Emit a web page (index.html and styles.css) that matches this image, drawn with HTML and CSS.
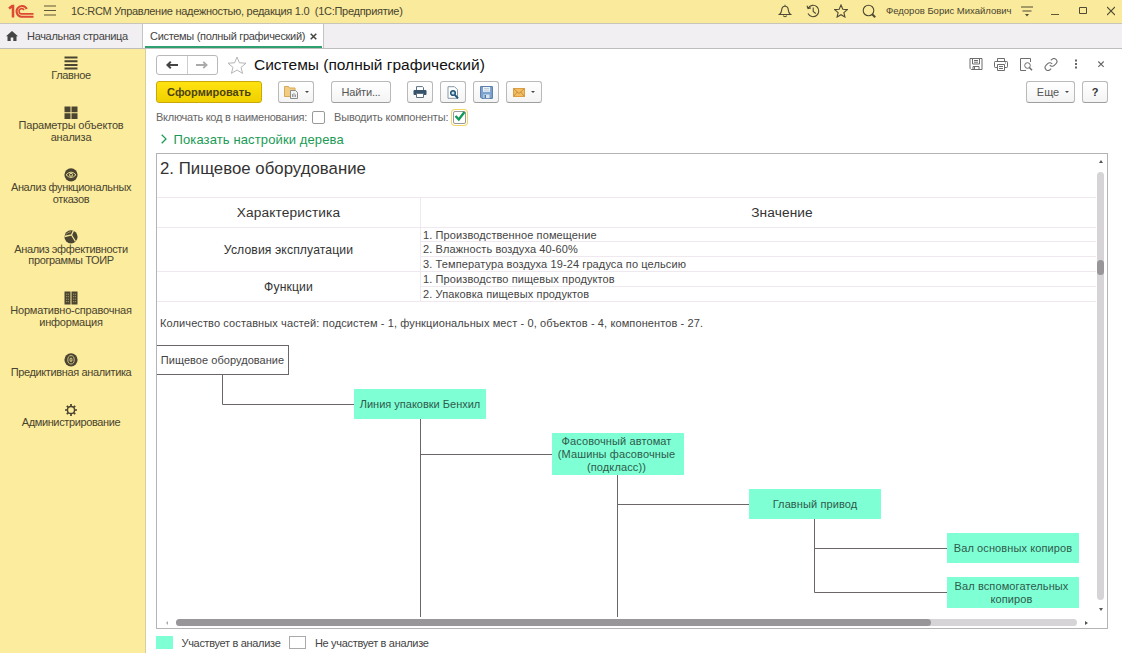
FILE: index.html
```html
<!DOCTYPE html>
<html lang="ru">
  <head>
    <meta charset="UTF-8" />
    <meta name="viewport" content="width=device-width, initial-scale=1.0" />
    <title>1C:RCM Управление надежностью</title>
    <link rel="stylesheet" href="styles.css">
  </head>
  <body>
    <!-- Title bar -->
    <header class="titlebar">
      <svg class="logo" width="26" height="14" viewBox="0 0 26 14" fill="none" stroke="#dc4a35">
        <path d="M1 4.500 4.200 2H5v11.500" stroke-width="2.500"/>
        <path d="M18.800 5A5.400 5.400 0 1 0 13.500 12.800H25.500" stroke-width="2"/>
        <path d="M16 6.200A2.600 2.600 0 1 0 13.500 9.900H25.500" stroke-width="1.600"/>
      </svg>
      <svg class="burger" width="12" height="11" viewBox="0 0 12 11" stroke="#5d5638" stroke-width="1.200">
        <path d="M0 1h12M0 5.500h12M0 10h12"/>
      </svg>
      <span class="app-name">1C:RCM Управление надежностью, редакция 1.0&nbsp; (1С:Предприятие)</span>
      <div class="title-icons">
        <svg width="14" height="14" viewBox="0 0 14 14" fill="none" stroke="#4e4a35" stroke-width="1.100">
          <path d="M1.500 10.500c1.800-1.200 2-2.600 2.200-4.600C3.900 3.600 5 2.300 7 2.300s3.100 1.300 3.300 3.600c.2 2 .4 3.400 2.200 4.600zM7 .8v1.500M5.400 11.500c.3 1.700 2.900 1.700 3.200 0"/>
        </svg>
        <svg width="14" height="14" viewBox="0 0 14 14" fill="none" stroke="#4e4a35" stroke-width="1.100">
          <path d="M2.200 4A5.700 5.700 0 1 1 2 9.600M1 1.800l1 2.700 2.900-.6M7.200 3.500v4l2.600 2"/>
        </svg>
        <svg width="14" height="14" viewBox="0 0 14 14" fill="none" stroke="#4e4a35" stroke-width="1.100">
          <path d="m7 1 1.800 4.200 4.500.4-3.400 3 1 4.400L7 10.700 3.100 13l1-4.400-3.400-3 4.500-.4z"/>
        </svg>
        <svg width="14" height="14" viewBox="0 0 14 14" fill="none" stroke="#4e4a35" stroke-width="1.100">
          <circle cx="6.500" cy="6.500" r="5.300"/><path d="m10.200 10.200 3 3" stroke-width="2"/>
        </svg>
      </div>
      <span class="user-name">Федоров Борис Михайлович</span>
      <svg class="service" width="12" height="12" viewBox="0 0 12 12" stroke="#4e4a35" stroke-width="1.200">
        <path d="M0 2h12M1.500 6h9"/><path d="M4 9h4l-2 2.500z" fill="#4e4a35" stroke="none"/>
      </svg>
      <div class="window-buttons">
        <svg width="8" height="10" viewBox="0 0 8 10" stroke="#5d5638"><path d="M0 8.500h8"/></svg>
        <svg width="8" height="10" viewBox="0 0 8 10" fill="none" stroke="#4e4a35"><path d="M.5 1.500h7v6h-7z"/></svg>
        <svg width="8" height="10" viewBox="0 0 8 10" stroke="#4e4a35" stroke-width="1.100"><path d="m0 1 8 8M8 1 0 9"/></svg>
      </div>
    </header>

    <!-- Open pages -->
    <nav class="tabs">
      <div class="tab home">
        <svg width="12" height="10" viewBox="0 0 12 10" fill="#444"><path d="M6 0 0 5.300h1.500V10h3.200V6.500h2.600V10h3.200V5.300H12z"/></svg>
        <span class="tab-text">Начальная страница</span>
      </div>
      <div class="tab active">
        <span class="tab-text">Системы (полный графический)</span>
        <svg width="7" height="7" viewBox="0 0 7 7" stroke="#444" stroke-width="1.500"><path d="m.7.7 5.600 5.600M6.300.7.7 6.300"/></svg>
      </div>
    </nav>

    <div class="workspace">
      <!-- Sections -->
      <aside class="sidebar">
        <div class="section">
          <svg width="14" height="14" viewBox="0 0 14 14" stroke="#4a4431" stroke-width="2"><path d="M.5 1.500h13M.5 5.200h13M.5 8.900h13M.5 12.600h13"/></svg>
          <span>Главное</span>
        </div>
        <div class="section wide">
          <svg width="14" height="14" viewBox="0 0 14 14" fill="#4a4431"><path d="M.5.500h6v5.800h-6zM7.500.500h6v5.800h-6zM.5 7.300h6v5.800h-6zM7.500 7.300h6v5.800h-6z"/></svg>
          <span>Параметры объектов<br>анализа</span>
        </div>
        <div class="section">
          <svg width="14" height="14" viewBox="0 0 14 14" fill="none"><circle cx="7" cy="6.800" r="6.600" fill="#4a4431"/><path d="M2 6.800Q7 1.500 12 6.800 7 12.100 2 6.800z" stroke="#e6d891"/><circle cx="7" cy="6.800" r="1.500" stroke="#e6d891"/></svg>
          <span>Анализ функциональных<br>отказов</span>
        </div>
        <div class="section">
          <svg width="14" height="14" viewBox="0 0 14 14" fill="none"><circle cx="7" cy="6.800" r="6.600" fill="#4a4431"/><path d="M.5 6.500 7.500 5 9.500.4M7.500 5l4 6.500" stroke="#f3e596" stroke-width="1.300"/><path d="M2 4.700Q3.500 1.800 7 1.700" stroke="#a59b6b"/></svg>
          <span>Анализ эффективности<br>программы ТОИР</span>
        </div>
        <div class="section wide">
          <svg width="14" height="14" viewBox="0 0 14 14"><path d="M.5.500h6v12.900h-6zM7.500.500h6v12.900h-6z" fill="#4a4431"/><path d="M2 3.200h3M2 5.700h3M2 8.200h3M2 10.700h3M9 3.200h3M9 5.700h3M9 8.200h3M9 10.700h3" stroke="#a59b6b" stroke-dasharray="1.200 .6"/></svg>
          <span>Нормативно-справочная<br>информация</span>
        </div>
        <div class="section">
          <svg width="14" height="14" viewBox="0 0 14 14" fill="none"><circle cx="7" cy="6.800" r="6.600" fill="#4a4431"/><ellipse cx="7" cy="6.800" rx="3.200" ry="4.200" stroke="#cdc184"/><ellipse cx="7" cy="6.800" rx="1" ry="1.800" stroke="#e6d891"/></svg>
          <span>Предиктивная аналитика</span>
        </div>
        <div class="section">
          <svg width="14" height="14" viewBox="0 0 14 14" fill="none" stroke="#4a4431"><circle cx="7" cy="7" r="3.600" stroke-width="1.500"/><path d="M7 1v2.400M7 10.600V13M1 7h2.400M10.600 7H13M2.800 2.800l1.600 1.600M9.600 9.600l1.600 1.600M11.200 2.800 9.600 4.400M4.400 9.600l-1.600 1.600" stroke-width="1.700"/></svg>
          <span>Администрирование</span>
        </div>
      </aside>

      <main class="page">
        <div class="page-head">
          <div class="history">
            <button class="history-btn"><svg width="12" height="8" viewBox="0 0 12 8" fill="none" stroke="#444" stroke-width="2"><path d="M12 4H1.500M4.800.8 1.400 4l3.400 3.200"/></svg></button>
            <button class="history-btn"><svg width="12" height="8" viewBox="0 0 12 8" fill="none" stroke="#aaa" stroke-width="1.800"><path d="M0 4h10.500M7.200.8 10.600 4 7.200 7.200"/></svg></button>
          </div>
          <svg class="favorite" width="20" height="18" viewBox="0 0 20 18" fill="none" stroke="#b5b5b5"><path d="m10 1 2.400 5.800 6.600.4-5 4.200 1.600 6L10 14l-5.600 3.400 1.600-6-5-4.200 6.600-.4z"/></svg>
          <h1>Системы (полный графический)</h1>
          <div class="head-icons">
            <svg width="14" height="13" viewBox="0 0 14 13" fill="none" stroke="#6c6c6c"><path d="M1 .5h12v11H2.200L1 10.300zM3.500.5v5.500h7V.5M4 11.500V8.500h6v3M5 2.500h4M5 4.200h4M5.500 9v2.500"/></svg>
            <svg width="14" height="13" viewBox="0 0 14 13" fill="none" stroke="#6c6c6c"><path d="M3.500 3.500V.5h7v3M3.500 9.500H1.200q-.7 0-.7-.8V4.300q0-.8.7-.8h11.600q.7 0 .7.800v4.400q0 .8-.7.800h-2.300M3.500 6.500h7v6h-7zM5 8.500h4M5 10.500h4M11 5h1"/></svg>
            <svg width="14" height="13" viewBox="0 0 14 13" fill="none" stroke="#6c6c6c"><path d="M7 12.500H1.500V.5h10v3.500"/><circle cx="8.500" cy="7.500" r="2.800"/><path d="m10.400 9.400 2.600 2.800" stroke-width="1.500"/></svg>
            <svg width="14" height="13" viewBox="1 1 22 22" fill="none" stroke="#6c6c6c" stroke-width="1.800"><path d="M10 13a5 5 0 0 0 7.540.540l3-3a5 5 0 0 0-7.070-7.070l-1.720 1.710M14 11a5 5 0 0 0-7.540-.540l-3 3a5 5 0 0 0 7.070 7.070l1.710-1.710"/></svg>
            <svg width="14" height="13" viewBox="0 0 14 13" fill="#666"><path d="M6 1.500h2v2H6zM6 5h2v2H6zM6 8.500h2v2H6z"/></svg>
            <svg width="14" height="13" viewBox="0 0 14 13" stroke="#666" stroke-width="1.100"><path d="m4.300 3.500 5.400 5.400M9.700 3.500 4.300 8.900"/></svg>
          </div>
        </div>

        <div class="toolbar">
          <button class="btn primary">Сформировать</button>
          <button class="btn variants">
            <svg width="15" height="14" viewBox="0 0 15 14"><path d="M.5 11.500V1.500h4l1 1.500H11v8.500z" fill="#f0cd83" stroke="#d9a755"/><path d="M6.500 5.500h5l2 2v6h-7z" fill="#f4f4f4" stroke="#8b8b8b"/><path d="M8.500 12V9M10 12V8M11.500 12V9.500" stroke="#999"/></svg>
            <i class="caret"></i>
          </button>
          <button class="btn find">Найти...</button>
          <button class="btn print">
            <svg width="14" height="12" viewBox="0 0 14 12"><path d="M3.500 4V.6h6l1 1V4" fill="#fff" stroke="#5c6f80"/><rect x=".5" y="4" width="13" height="5" rx="1" fill="#36536c"/><path d="M3.500 7.500h7v4h-7z" fill="#fff" stroke="#5c6f80"/></svg>
          </button>
          <button class="btn preview">
            <svg width="12" height="13" viewBox="0 0 12 13"><path d="M1 .7h6.500l3 3v8.600H1z" fill="#fff" stroke="#8797a5"/><circle cx="6" cy="7" r="2.300" fill="#c9dcea" stroke="#1f5478" stroke-width="1.500"/><path d="m7.800 8.800 3.200 3.500" stroke="#1f5478" stroke-width="2"/></svg>
          </button>
          <button class="btn save">
            <svg width="13" height="13" viewBox="0 0 13 13"><path d="M.6.6h11.800v11.800H1.800L.6 11.200z" fill="#7fa3cf" stroke="#5278a6"/><path d="M3 1h7v4.800H3z" fill="#eef3f8"/><path d="M3.500 8.500h6v3.700h-6z" fill="#d9e4ef"/><path d="M4.500 9h1.500v3H4.500z" fill="#5278a6"/><path d="M4 2.500h5M4 4.200h5" stroke="#a8bbd0" stroke-width=".7"/></svg>
          </button>
          <button class="btn mail">
            <svg width="12" height="9" viewBox="0 0 12 9"><path d="M.5.5h11v8H.5z" fill="#f1bf62" stroke="#dc9d43"/><path d="m.5.5 5.500 5 5.500-5M.5 8.500 4.300 4M11.500 8.500 7.700 4" fill="none" stroke="#c27e37" stroke-width=".8"/></svg>
            <i class="caret"></i>
          </button>
          <button class="btn more">Еще <i class="caret"></i></button>
          <button class="btn help">?</button>
        </div>

        <div class="options">
          <span class="opt-code">Включать код в наименования:</span>
          <span class="checkbox"></span>
          <span class="opt-comp">Выводить компоненты:</span>
          <span class="checkbox focused">
            <svg width="13" height="12" viewBox="0 0 13 12" fill="none" stroke="#0f9b57" stroke-width="2.400"><path d="M1.500 5 4.800 8.500 10.500 1"/></svg>
          </span>
        </div>

        <div class="tree-settings">
          <svg width="6" height="10" viewBox="0 0 6 10" fill="none" stroke="#1a9b55" stroke-width="1.300"><path d="m.7.700 4.300 4.200L.7 9.200"/></svg>
          <span>Показать настройки дерева</span>
        </div>

        <!-- Report -->
        <div class="report">
          <div class="sheet">
            <h2>2. Пищевое оборудование</h2>
            <div class="specs">
              <div class="cell head">Характеристика</div>
              <div class="cell head meaning">Значение</div>
              <div class="cell name span3">Условия эксплуатации</div>
              <div class="cell value">1. Производственное помещение</div>
              <div class="cell value">2. Влажность воздуха 40-60%</div>
              <div class="cell value">3. Температура воздуха 19-24 градуса по цельсию</div>
              <div class="cell name span2">Функции</div>
              <div class="cell value">1. Производство пищевых продуктов</div>
              <div class="cell value">2. Упаковка пищевых продуктов</div>
            </div>
            <p class="totals">Количество составных частей: подсистем - 1, функциональных мест - 0, объектов - 4, компонентов - 27.</p>
            <div class="diagram">
              <svg class="links" width="940" height="272" viewBox="0 0 940 272" fill="none" stroke="#6b6769">
                <path d="M65.500 30v29.500H197M263.500 74v198M263.500 109.500H395M460.500 129v143M460.500 159.500H592M657.500 174v73.500H790M657.500 203.500H790"/>
              </svg>
              <div class="node root">Пищевое оборудование</div>
              <div class="node line">Линия упаковки Бенхил</div>
              <div class="node machine">Фасовочный автомат<br>(Машины фасовочные<br>(подкласс))</div>
              <div class="node drive">Главный привод</div>
              <div class="node shaft-main">Вал основных копиров</div>
              <div class="node shaft-aux">Вал вспомогательных<br>копиров</div>
            </div>
          </div>
          <div class="vscroll">
            <i class="arrow up"></i>
            <div class="track"><div class="thumb"></div></div>
            <i class="arrow down"></i>
          </div>
          <div class="hscroll">
            <i class="arrow left"></i>
            <div class="track"><div class="thumb"></div></div>
            <i class="arrow right"></i>
          </div>
        </div>

        <div class="legend">
          <span class="swatch used"></span>
          <span class="leg-used">Участвует в анализе</span>
          <span class="swatch"></span>
          <span class="leg-unused">Не участвует в анализе</span>
        </div>
      </main>
    </div>
  </body>
</html>
```
FILE: styles.css
```css
* {
  box-sizing: border-box;
}
body {
  margin: 0;
  width: 1123px;
  height: 653px;
  overflow: hidden;
  display: flex;
  flex-direction: column;
  font-family: "Liberation Sans", Arial, sans-serif;
  font-size: 11px;
  color: #444;
  background-color: #fff;
  white-space: nowrap;
}
svg {
  display: block;
  flex: none;
}
/* Title bar */
.titlebar {
  display: flex;
  align-items: center;
  height: 23px;
  margin-right: 1px;
  padding: 0 7px 2px 8px;
  background-color: #faea9b;
  color: #49442f;
}
.burger {
  margin-left: 10px;
}
.app-name {
  margin-left: 15px;
  letter-spacing: -0.28px;
}
.title-icons {
  display: flex;
  gap: 14px;
  margin-left: auto;
}
.user-name {
  width: 124px;
  margin-left: 10px;
  font-size: 9.5px;
}
.service {
  margin-left: 11px;
}
.window-buttons {
  display: flex;
  gap: 20px;
  margin-left: 18px;
}
/* Tabs */
.tabs {
  display: flex;
  height: 26px;
  margin-right: 1px;
  background-color: #f1eff2;
  border-top: 1px solid #c9c5b8;
  border-bottom: 1px solid #bdbdbd;
}
.tab {
  display: flex;
  align-items: center;
}
.tab-text {
  letter-spacing: -0.31px;
}
.home {
  width: 142px;
  padding-left: 6px;
  gap: 9px;
}
.active {
  width: 182px;
  padding: 0 6px 0 7px;
  justify-content: space-between;
  background: linear-gradient(#2fa070, #2fa070) center bottom / 177px 2px no-repeat #fff;
  border-left: 1px solid #c4c4c4;
  border-right: 1px solid #c4c4c4;
}
/* Sections panel */
.workspace {
  display: flex;
  flex: 1;
}
.sidebar {
  width: 146px;
  padding: 7px 3px 0 0;
  background-color: #fcec9e;
  border-right: 1px solid #d8cf9f;
  color: #49442f;
}
.section {
  display: flex;
  flex-direction: column;
  align-items: center;
  margin-bottom: 24.4px;
  line-height: 11.7px;
  letter-spacing: -0.37px;
  text-align: center;
}
.wide {
  letter-spacing: -0.2px;
}
/* Page */
.page {
  flex: 1;
  padding: 5px 15px 0 10px;
}
.page-head {
  display: flex;
  align-items: center;
  height: 22px;
}
.history {
  display: flex;
  width: 62px;
  height: 20px;
  border: 1px solid #b9b9b9;
  border-radius: 3px;
}
.history-btn {
  display: flex;
  flex: 1;
  align-items: center;
  justify-content: center;
  padding: 0;
  border: none;
  background: none;
}
.history-btn + .history-btn {
  border-left: 1px solid #ccc;
}
.favorite {
  margin-left: 9px;
}
h1 {
  margin: 0 0 0 7px;
  font-size: 15.5px;
  font-weight: normal;
  color: #111;
}
.head-icons {
  display: flex;
  gap: 11px;
  margin: -1px 0 0 auto;
}
.toolbar {
  display: flex;
  height: 22px;
  margin-top: 5px;
}
.btn {
  display: flex;
  align-items: center;
  justify-content: center;
  height: 22px;
  padding: 0;
  border: 1px solid #b9b9b9;
  border-bottom-color: #9e9e9e;
  border-radius: 3px;
  background: linear-gradient(#fff, #f4f4f4);
  font-family: inherit;
  font-size: 11px;
  color: #555;
}
.primary {
  width: 106px;
  border-color: #c9a90a;
  background: linear-gradient(#ffe310, #f0d000);
  font-weight: bold;
  color: #4c4210;
}
.caret {
  border: 2px solid transparent;
  border-top: 2px solid #444;
  border-bottom: none;
}
.variants {
  width: 36px;
  margin-left: 16px;
  gap: 6px;
}
.find {
  width: 60px;
  margin-left: 17px;
  letter-spacing: -0.2px;
}
.print,
.preview,
.save {
  width: 26px;
  margin-left: 7px;
}
.print {
  margin-left: 16px;
}
.mail {
  width: 36px;
  margin-left: 7px;
  gap: 6px;
}
.more {
  width: 49px;
  margin-left: auto;
  padding-left: 5px;
  gap: 6px;
}
.help {
  width: 26px;
  margin-left: 7px;
  font-weight: bold;
  color: #333;
}
.options {
  display: flex;
  align-items: center;
  height: 20px;
  margin-top: 4px;
  letter-spacing: -0.27px;
  color: #666;
}
.opt-comp {
  letter-spacing: -0.2px;
}
.checkbox {
  width: 13px;
  height: 13px;
  margin: 0 9px 0 5px;
  border: 1px solid #999;
  border-radius: 2px;
}
.focused {
  box-shadow: 0 0 0 1px #fff, 0 0 0 2px #f3d566;
}
.focused svg {
  margin-top: -1px;
}
.tree-settings {
  display: flex;
  align-items: center;
  height: 20px;
  margin-top: 2px;
  padding-left: 5px;
  gap: 6.5px;
  font-size: 13px;
  letter-spacing: 0.12px;
  color: #1a9b55;
}
/* Report */
.report {
  display: grid;
  grid-template-columns: 1fr 11px;
  grid-template-rows: 463px 11px;
  width: 952px;
  height: 476px;
  margin-top: 4px;
  border: 1px solid #b5b3b5;
}
.sheet {
  overflow: hidden;
  letter-spacing: 0.11px;
}
h2 {
  height: 43px;
  margin: 0;
  padding: 5px 0 0 3px;
  font-size: 16.8px;
  line-height: 20px;
  font-weight: normal;
  letter-spacing: 0.02px;
  color: #333;
}
.specs {
  display: grid;
  grid-template-columns: 264px 1fr;
  grid-template-rows: 30px 14px 15px 15px 15px 15px;
  height: 105px;
  border-top: 1px solid #efe9ef;
}
.cell {
  display: flex;
  align-items: center;
  border-bottom: 1px solid #efe9ef;
}
.cell.head,
.cell.name {
  justify-content: center;
  border-right: 1px solid #efe9ef;
  font-size: 13.7px;
  color: #333;
}
.cell.name {
  font-size: 12.2px;
}
.cell.meaning {
  padding-left: 47px;
  border-right: none;
}
.cell.value {
  padding-left: 2px;
}
.span3 {
  grid-row: span 3;
}
.span2 {
  grid-row: span 2;
}
.totals {
  margin: 13px 0 0 3px;
  line-height: 16px;
}
.diagram {
  position: relative;
  height: 272px;
  margin-top: 14px;
}
.links {
  position: absolute;
  left: 0;
  top: 0;
}
.node {
  position: absolute;
  display: flex;
  align-items: center;
  justify-content: center;
  width: 132px;
  height: 30px;
  background-color: #7fffd4;
  line-height: 13px;
  text-align: center;
  color: #2e5a4c;
}
.root {
  left: -1px;
  top: 0;
  width: 133px;
  border: 1px solid #6b6769;
  background-color: #fff;
  color: #444;
  letter-spacing: 0.05px;
}
.line {
  left: 197px;
  top: 44px;
  letter-spacing: 0;
}
.machine {
  left: 395px;
  top: 88px;
  height: 42px;
  padding-right: 3px;
}
.drive {
  left: 592px;
  top: 144px;
}
.shaft-main {
  left: 790px;
  top: 188px;
}
.shaft-aux {
  left: 790px;
  top: 232px;
  height: 31px;
  padding-right: 3px;
}
.vscroll {
  display: flex;
  flex-direction: column;
  align-items: center;
  padding: 6px 2px 0 0;
}
.vscroll .track {
  width: 7px;
  height: 428px;
  margin: 9px 0 8px;
  padding-top: 88px;
}
.vscroll .thumb {
  height: 15px;
}
.hscroll {
  display: flex;
  align-items: center;
  grid-column: 1 / 3;
  padding-left: 9px;
}
.hscroll .track {
  width: 901px;
  height: 7px;
  margin: 0 8px 0 8px;
}
.hscroll .thumb {
  width: 755px;
  height: 7px;
}
.track {
  border-radius: 4px;
  background-color: #d6d4d6;
}
.thumb {
  border-radius: 4px;
  background-color: #989698;
}
.arrow {
  border: 2px solid transparent;
}
.up {
  border-top: none;
  border-bottom: 3px solid #555;
}
.down {
  border-bottom: none;
  border-top: 3px solid #555;
}
.left {
  border-left: none;
  border-right: 2px solid #aaa;
}
.right {
  border-right: none;
  border-left: 3px solid #555;
}
.legend {
  display: flex;
  align-items: center;
  height: 13px;
  margin-top: 7px;
  letter-spacing: -0.32px;
}
.swatch {
  width: 17px;
  height: 13px;
  margin-right: 8.5px;
  border: 1px solid #aaa;
}
.used {
  border: none;
  background-color: #7fffd4;
}
.leg-used {
  margin-right: 9px;
}
```
